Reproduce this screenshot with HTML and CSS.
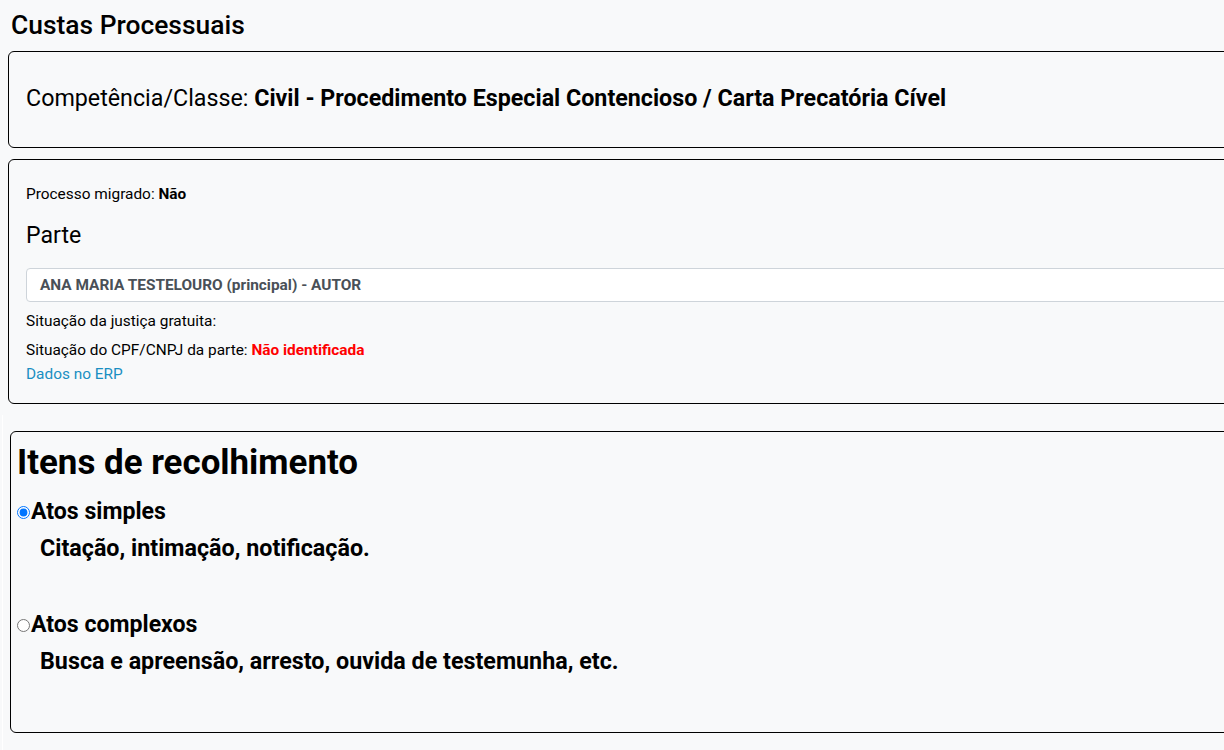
FILE: index.html
```html
<!DOCTYPE html>
<html lang="pt-BR">
<head>
<meta charset="utf-8">
<title>Custas Processuais</title>
<link rel="stylesheet" href="styles.css">
</head>
<body>
<div class="page">
  <h4 class="page-title">Custas Processuais</h4>
  <div class="card card-classe">
    <p class="classe">Competência/Classe: <strong>Civil - Procedimento Especial Contencioso / Carta Precatória Cível</strong></p>
  </div>
  <div class="card card-parte">
    <p class="small-line">Processo migrado: <strong>Não</strong></p>
    <h5 class="parte-title">Parte</h5>
    <div class="select-box">ANA MARIA TESTELOURO (principal) - AUTOR</div>
    <p class="small-line gratuita">Situação da justiça gratuita:</p>
    <p class="small-line cpf">Situação do CPF/CNPJ da parte: <strong class="red">Não identificada</strong></p>
    <a class="erp-link" href="#">Dados no ERP</a>
  </div>
  <div class="itens-wrap">
    <div class="card card-itens">
      <h2 class="itens-title">Itens de recolhimento</h2>
      <div class="opcao">
        <label class="opcao-label"><input type="radio" name="tipo" checked><span>Atos simples</span></label>
        <p class="opcao-desc">Citação, intimação, notificação.</p>
      </div>
      <div class="opcao">
        <label class="opcao-label"><input type="radio" name="tipo"><span>Atos complexos</span></label>
        <p class="opcao-desc">Busca e apreensão, arresto, ouvida de testemunha, etc.</p>
      </div>
    </div>
  </div>
</div>
</body>
</html>
```
FILE: styles.css
```css
* { box-sizing: border-box; }
html, body { margin: 0; padding: 0; }
body {
  background: #f8f9fa;
  font-family: Roboto, "Liberation Sans", sans-serif;
  color: #000;
  overflow: hidden;
  width: 1224px;
  height: 750px;
}
.page {
  padding: 0 0 0 8px;
  width: 1260px;
}
.page-title {
  margin: 0;
  padding: 9px 0 0 3px;
  font-size: 26.4px;
  font-weight: 500;
  line-height: 32px;
  height: 51px;
}
.card {
  border: 1px solid #000;
  border-radius: 6px;
}
.card-classe {
  height: 97px;
  padding: 0 17px 4px;
  display: flex;
  align-items: center;
}
.classe {
  margin: 0;
  font-size: 23.25px;
  line-height: 28px;
}
.classe strong { font-weight: 700; }
.card-parte {
  margin-top: 11px;
  height: 245px;
  padding: 23px 17px 0;
}
.small-line {
  margin: 0;
  font-size: 15.4px;
  line-height: 23px;
}
.small-line strong { font-weight: 700; }
.red { color: #ff0000; }
.parte-title {
  margin: 16px 0 0;
  font-size: 23.1px;
  font-weight: 400;
  line-height: 28px;
}
.select-box {
  margin-top: 18px;
  height: 34px;
  background: #fff;
  border: 1px solid #ced4da;
  border-radius: 4px;
  padding: 0 13px;
  font-size: 15.4px;
  font-weight: 700;
  color: #495057;
  line-height: 32px;
}
.gratuita { margin-top: 8px; }
.cpf { margin-top: 6px; }
.erp-link {
  display: block;
  font-size: 15.4px;
  line-height: 23px;
  color: #1a8fc2;
  text-decoration: none;
  margin-top: 1px;
}
.itens-wrap {
  margin: 11px 0 0 -6px;
  border-left: 1px solid #ffffff;
  padding: 16px 0 0 7px;
  height: 340px;
}
.card-itens {
  height: 302px;
  padding: 10px 6px 0;
}
.itens-title {
  margin: 0;
  font-size: 34.9px;
  font-weight: 700;
  line-height: 42px;
}
.opcao {
  margin-top: 14px;
}
.opcao + .opcao { margin-top: 49px; }
.opcao-label {
  display: flex;
  align-items: center;
  font-size: 23.1px;
  font-weight: 700;
  line-height: 28px;
}
.opcao-label input {
  margin: 0 1px 0 0;
  width: 13px;
  height: 13px;
}
.opcao-desc {
  margin: 8px 0 0 23px;
  font-size: 23.3px;
  font-weight: 700;
  line-height: 28px;
}
```
